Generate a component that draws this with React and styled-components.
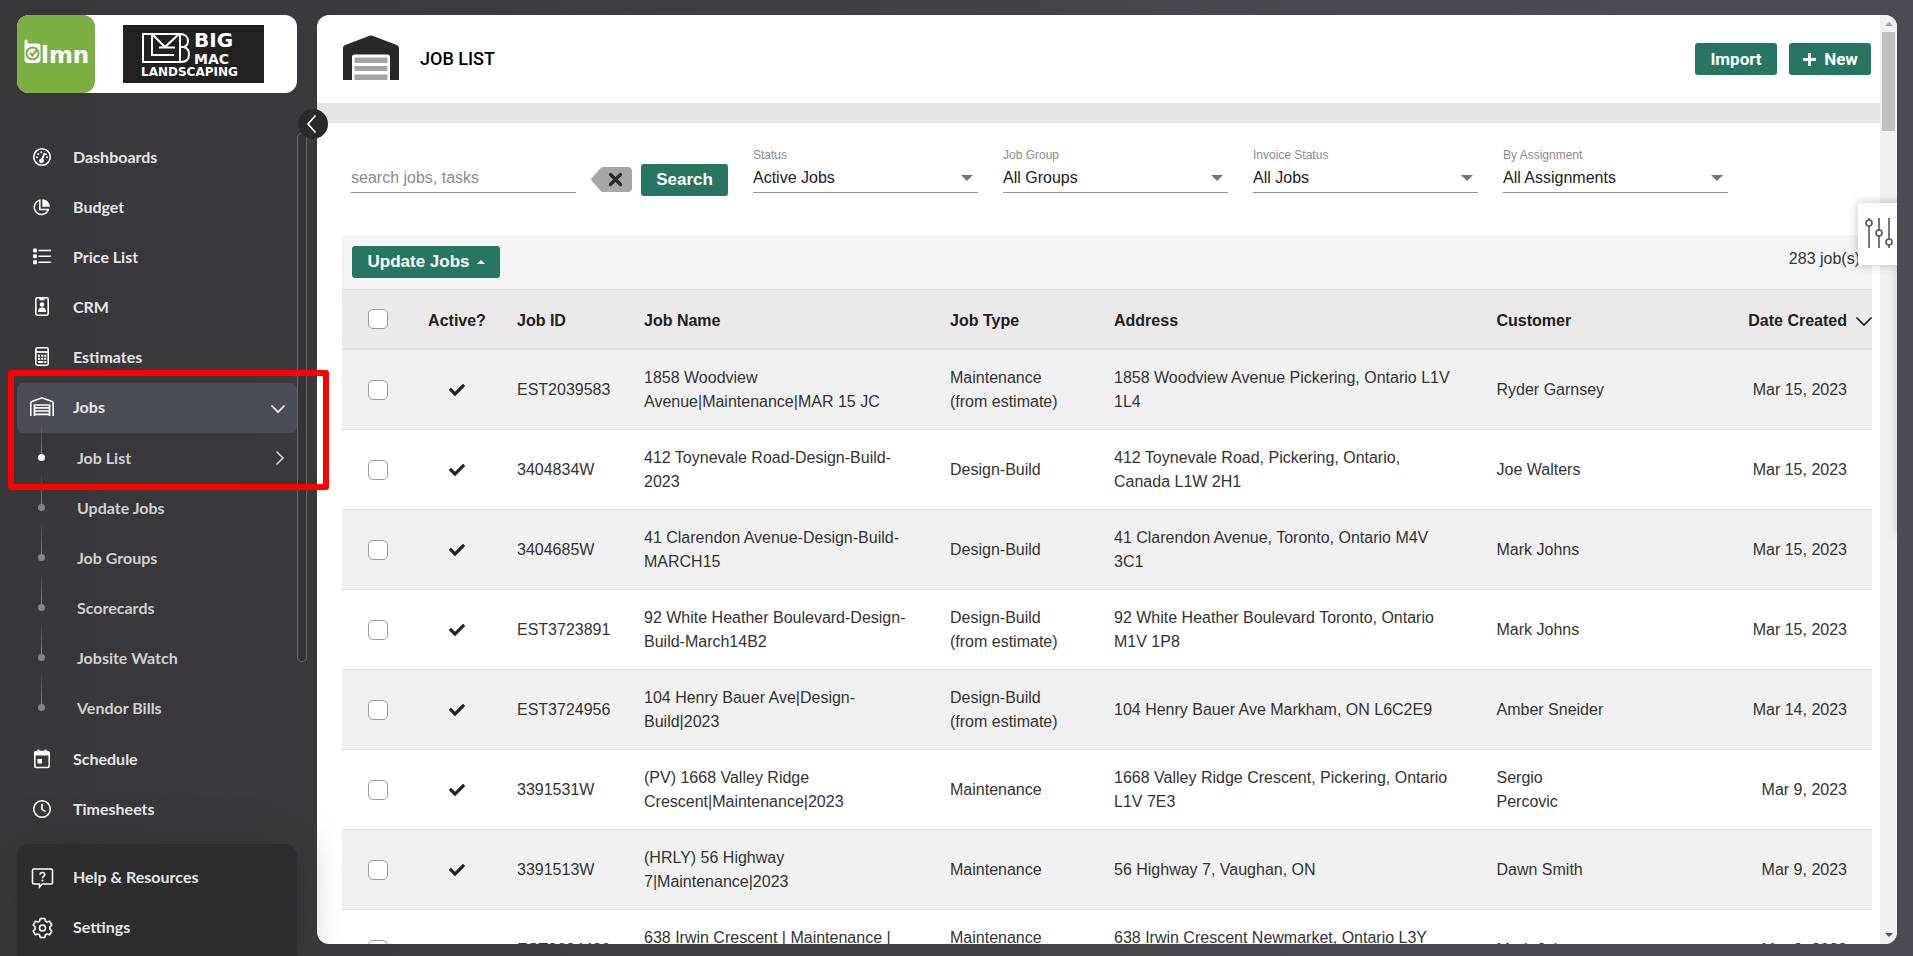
import React, { useState } from "react";
import styled, { createGlobalStyle } from "styled-components";
import { FaCheck, FaPlus } from "react-icons/fa";

const GlobalStyle = createGlobalStyle`
  * {
    box-sizing: border-box;
  }
  body {
    margin: 0;
    font-family: "Liberation Sans", Arial, sans-serif;
    font-size: 16px;
    color: #212121;
    background: linear-gradient(90deg, #38373b 0%, #3a393d 18%, #4c4b54 85%);
  }
  button, input, select {
    font-family: inherit;
    font-size: inherit;
  }
`;

const subLinks = [
  { title: "Job List", active: true },
  { title: "Update Jobs" },
  { title: "Job Groups" },
  { title: "Scorecards" },
  { title: "Jobsite Watch" },
  { title: "Vendor Bills" },
];

const filters = [
  { id: "status", label: "Status", value: "Active Jobs" },
  { id: "group", label: "Job Group", value: "All Groups" },
  { id: "invoice", label: "Invoice Status", value: "All Jobs" },
  { id: "assignment", label: "By Assignment", value: "All Assignments" },
];

const jobs = [
  {
    id: "EST2039583",
    name: "1858 Woodview\nAvenue|Maintenance|MAR 15 JC",
    type: "Maintenance\n(from estimate)",
    address: "1858 Woodview Avenue Pickering, Ontario L1V\n1L4",
    customer: "Ryder Garnsey",
    date: "Mar 15, 2023",
  },
  {
    id: "3404834W",
    name: "412 Toynevale Road-Design-Build-\n2023",
    type: "Design-Build",
    address: "412 Toynevale Road, Pickering, Ontario,\nCanada L1W 2H1",
    customer: "Joe Walters",
    date: "Mar 15, 2023",
  },
  {
    id: "3404685W",
    name: "41 Clarendon Avenue-Design-Build-\nMARCH15",
    type: "Design-Build",
    address: "41 Clarendon Avenue, Toronto, Ontario M4V\n3C1",
    customer: "Mark Johns",
    date: "Mar 15, 2023",
  },
  {
    id: "EST3723891",
    name: "92 White Heather Boulevard-Design-\nBuild-March14B2",
    type: "Design-Build\n(from estimate)",
    address: "92 White Heather Boulevard Toronto, Ontario\nM1V 1P8",
    customer: "Mark Johns",
    date: "Mar 15, 2023",
  },
  {
    id: "EST3724956",
    name: "104 Henry Bauer Ave|Design-\nBuild|2023",
    type: "Design-Build\n(from estimate)",
    address: "104 Henry Bauer Ave Markham, ON L6C2E9",
    customer: "Amber Sneider",
    date: "Mar 14, 2023",
  },
  {
    id: "3391531W",
    name: "(PV) 1668 Valley Ridge\nCrescent|Maintenance|2023",
    type: "Maintenance",
    address: "1668 Valley Ridge Crescent, Pickering, Ontario\nL1V 7E3",
    customer: "Sergio\nPercovic",
    date: "Mar 9, 2023",
  },
  {
    id: "3391513W",
    name: "(HRLY) 56 Highway\n7|Maintenance|2023",
    type: "Maintenance",
    address: "56 Highway 7, Vaughan, ON",
    customer: "Dawn Smith",
    date: "Mar 9, 2023",
  },
  {
    id: "EST3634480",
    name: "638 Irwin Crescent | Maintenance |\n2023",
    type: "Maintenance\n(from estimate)",
    address: "638 Irwin Crescent Newmarket, Ontario L3Y\n5A2",
    customer: "Mark Johns",
    date: "Mar 9, 2023",
  },
];

const Layout = styled.div`
  display: flex;
  height: 100vh;
  overflow: hidden;
`;

/* sidebar */

const Sidebar = styled.aside`
  flex: 0 0 317px;
  position: relative;
  z-index: 2;
  display: flex;
  flex-direction: column;
  padding: 15px 20px 0 17px;
  font-family: Lato, "Open Sans", sans-serif;
`;

const Brand = styled.div`
  display: flex;
  height: 78px;
  margin-bottom: 40px;
  background: #fff;
  border-radius: 12px;
  .brand-app {
    width: 78px;
    border-radius: 12px;
    background: #7caf41;
  }
  .brand-company {
    margin: 10px auto 10px 28px;
  }
`;

const Nav = styled.nav`
  position: relative;
  display: flex;
  flex-direction: column;
`;

const NavItem = styled.a`
  display: flex;
  align-items: center;
  flex: 0 0 50px;
  height: 50px;
  padding: 0 11px;
  border-radius: 6px;
  color: #e6e6e6;
  font-weight: 700;
  text-decoration: none;
  background: ${(props) => (props.$active ? "#4b4d55" : "transparent")};
  svg {
    color: #fff;
  }
  .nav-icon {
    margin-bottom: 2px;
  }
  .nav-title {
    flex: 1;
    margin-left: 17px;
    padding-bottom: 4px;
  }
`;

const SubMenu = styled.ul`
  list-style: none;
  margin: 0 0 2px;
  padding: 0;
`;

const SubItem = styled.li`
  a {
    display: flex;
    align-items: center;
    height: 50px;
    padding: 0 10px 0 21px;
    color: #cfcfd0;
    font-weight: 700;
    text-decoration: none;
  }
  .rail {
    display: flex;
    flex-direction: column;
    align-items: center;
    width: 7px;
    height: 50px;
    margin-right: 32px;
  }
  .rail::before {
    content: "";
    width: 1px;
    height: 31px;
    margin-top: -10px;
    background: linear-gradient(transparent, #8a8a8d);
  }
  .rail::after {
    content: "";
    width: 7px;
    height: 7px;
    border-radius: 50%;
    background: ${(props) => (props.$active ? "#fff" : "#858588")};
  }
  .nav-title {
    flex: 1;
    padding-bottom: 2px;
  }
`;

const JobsGroup = styled.div`
  position: relative;
`;

const Marker = styled.div`
  position: absolute;
  left: -9px;
  top: -13px;
  width: 321px;
  height: 120px;
  border: 6px solid #f00;
  border-radius: 3px;
  pointer-events: none;
`;

const NavScroll = styled.div`
  position: absolute;
  top: 0;
  right: -10px;
  width: 10px;
  height: 529px;
  border: 1px solid #68676b;
  border-radius: 6px;
  background: #343337;
`;

const NavFooter = styled.nav`
  margin-top: auto;
  padding: 9px 0 3px;
  border-radius: 12px 12px 0 0;
  background: #2d2d2e;
  box-shadow: 0 0 40px rgba(45, 45, 46, 0.6);
`;

const CollapseButton = styled.button`
  position: absolute;
  top: 109px;
  right: -11px;
  width: 30px;
  height: 30px;
  padding: 0 2px 0 0;
  border: 0;
  border-radius: 50%;
  background: #2a2a2c;
  color: #fff;
  display: flex;
  align-items: center;
  justify-content: center;
`;

/* content panel */

const Panel = styled.div`
  flex: 1;
  min-width: 0;
  position: relative;
  display: flex;
  margin: 15px 16px 12px 0;
  border-radius: 12px;
  background: #fff;
  overflow: hidden;
`;

const Content = styled.main`
  flex: 1;
  min-width: 0;
  overflow-y: auto;
  scrollbar-width: none;
`;

const PageHeader = styled.header`
  display: flex;
  align-items: center;
  height: 88px;
  padding: 0 9px 0 26px;
  border-bottom: 20px solid #e4e4e4;
  box-sizing: content-box;
  .page-icon {
    margin-bottom: 2px;
  }
  h1 {
    flex: 1;
    margin: 0 0 0 21px;
    padding-bottom: 2px;
    font-family: Roboto, sans-serif;
    font-size: 18px;
    font-weight: 500;
    color: #000;
  }
  .header-actions {
    display: flex;
    gap: 12px;
    font-family: Roboto, sans-serif;
  }
`;

const Button = styled.button`
  display: inline-flex;
  align-items: center;
  justify-content: center;
  gap: 7px;
  height: 32px;
  min-width: ${(props) => props.$width || "82px"};
  padding: 0 12px;
  border: 0;
  border-radius: 3px;
  background: #267663;
  color: #fff;
  font-size: 17px;
  font-weight: 700;
`;

const FilterBar = styled.form`
  display: flex;
  align-items: flex-end;
  padding: 23px 34px 39px;
`;

const SearchInput = styled.input`
  width: 225px;
  height: 34px;
  margin: 0 15px 3px 0;
  padding: 5px 0 0;
  border: 0;
  border-bottom: 1px solid #949494;
  background: transparent;
  &::placeholder {
    color: #8a8a8a;
  }
`;

const ClearButton = styled.button`
  display: flex;
  height: 25px;
  margin: 0 9px 4px 0;
  padding: 0;
  border: 0;
  background: none;
`;

const Field = styled.div`
  width: 225px;
  margin: 0 0 3px 25px;
  label {
    display: block;
    padding-top: 1px;
    font-size: 12px;
    line-height: 16px;
    color: #8a8a8a;
  }
`;

const SelectBox = styled.div`
  display: flex;
  align-items: center;
  height: 30px;
  border-bottom: 1px solid #949494;
  select {
    appearance: none;
    flex: 1;
    width: 100%;
    padding: 0;
    border: 0;
    background: transparent;
    color: #212121;
  }
  &::after {
    content: "";
    margin-right: 5px;
    border: 6px solid transparent;
    border-top-color: #757575;
    border-bottom: 0;
  }
`;

const TableToolbar = styled.div`
  display: flex;
  justify-content: space-between;
  align-items: flex-start;
  height: 54px;
  margin: 0 8px 0 25px;
  padding: 11px 12px 11px 10px;
  background: #f4f4f4;
  .job-count {
    margin-top: 4px;
    color: #333;
  }
`;

const Caret = styled.span`
  border: 4px solid transparent;
  border-bottom-color: #fff;
  border-top: 0;
`;

const TableWrap = styled.div`
  margin: 0 8px 0 25px;
`;

const Table = styled.table`
  width: 100%;
  table-layout: fixed;
  border-collapse: separate;
  border-spacing: 0;
  line-height: 24px;
  th,
  td {
    padding: 0 12px;
    text-align: left;
    white-space: pre-line;
    border-top: 1px solid #dee2e6;
  }
  th {
    height: 60px;
    padding-top: 4px;
    background: #ebe9ea;
    border-bottom: 1px solid #dee2e6;
    font-weight: 700;
  }
  td {
    height: 80px;
    color: #333;
  }
  tbody tr:nth-child(odd) td {
    background: #f1f1f1;
  }
  .col-check {
    padding: 0 0 0 26px;
  }
  .col-active {
    padding-left: 0;
    padding-right: 0;
    text-align: center;
  }
  .col-active svg {
    display: block;
    margin: 0 auto;
    color: #212121;
  }
  .col-id {
    padding-left: 17px;
    padding-right: 0;
  }
  .col-date {
    padding-right: 25px;
    text-align: right;
  }
  th.col-date {
    padding-right: 0;
  }
  .sort {
    display: inline-flex;
    align-items: center;
    gap: 9px;
    padding: 0;
    border: 0;
    background: none;
    color: inherit;
    font-weight: 700;
  }
`;

const Checkbox = styled.input`
  appearance: none;
  display: block;
  width: 20px;
  height: 20px;
  margin: 0;
  border: 1px solid #999;
  border-radius: 5px;
  background: #fff;
  &:checked {
    background: #267663;
  }
`;

const ScrollTrack = styled.div`
  flex: 0 0 17px;
  display: flex;
  flex-direction: column;
  align-items: center;
  padding: 7px 0;
  background: #f1f1f1;
  .thumb {
    width: 13px;
    height: 99px;
    margin-top: 6px;
    background: #c1c1c1;
  }
  .up {
    border: 4px solid transparent;
    border-bottom-color: #a3a3a3;
    border-top: 0;
  }
  .down {
    margin-top: auto;
    border: 4px solid transparent;
    border-top-color: #505050;
    border-bottom: 0;
  }
`;

const DrawerTab = styled.button`
  position: absolute;
  top: 188px;
  right: 0;
  width: 39px;
  height: 62px;
  padding: 2px 0 0 3px;
  border: 0;
  border-radius: 3px 0 0 3px;
  background: #fff;
  box-shadow: 0 0 10px rgba(0, 0, 0, 0.25);
`;

const DrawerEdge = styled.div`
  position: absolute;
  top: 188px;
  right: -4px;
  width: 4px;
  height: 330px;
  box-shadow: 0 0 8px rgba(0, 0, 0, 0.25);
`;

const Icon = ({ children }) => (
  <svg
    className="nav-icon"
    width="28"
    height="28"
    viewBox="0 0 28 28"
    fill="none"
    stroke="currentColor"
    strokeWidth="1.6"
    aria-hidden="true"
  >
    {children}
  </svg>
);

const icons = {
  gauge: (
    <Icon>
      <circle cx="14" cy="14" r="8.3" />
      <circle cx="13.5" cy="17.8" r="1.6" fill="currentColor" />
      <path d="M14 17l2.5-7" strokeWidth="1.8" />
      <g fill="currentColor" stroke="none">
        <circle cx="9" cy="14.2" r="1" />
        <circle cx="10.2" cy="10.9" r="1" />
        <circle cx="13.3" cy="9.2" r="1" />
        <circle cx="19" cy="14.2" r="1" />
        <circle cx="18" cy="11.2" r="1" />
      </g>
    </Icon>
  ),
  pie: (
    <Icon>
      <path d="M11.8 7.3a7.2 7.2 0 1 0 8.6 9.2h-8.6z" strokeWidth="1.5" />
      <path d="M14.3 6.2v7.6h7.6a7.6 7.6 0 0 0-7.6-7.6z" fill="currentColor" stroke="none" />
    </Icon>
  ),
  list: (
    <Icon>
      <path d="M10.5 7.5H23M10.5 13.3H23M10.5 19.3H23" />
      <g fill="currentColor" stroke="none">
        <rect x="5" y="5.5" width="4" height="4" rx="1" />
        <rect x="5" y="11.3" width="4" height="4" rx="1" />
        <rect x="5" y="17.3" width="4" height="4" rx="1" />
      </g>
    </Icon>
  ),
  badge: (
    <Icon>
      <rect x="7.8" y="4.8" width="12.4" height="17.4" rx="1.6" />
      <g fill="currentColor" stroke="none">
        <rect x="11.5" y="4.5" width="5" height="2.8" />
        <circle cx="14" cy="11.5" r="2.2" />
        <path d="M10 19c0-3 1.5-4.4 4-4.4s4 1.4 4 4.4z" />
      </g>
    </Icon>
  ),
  calc: (
    <Icon>
      <rect x="7.8" y="4.8" width="12.4" height="17.4" rx="1.6" />
      <path d="M8 9h12" strokeWidth="1.8" />
      <path
        d="M10 12.8h2.1m1 0h2.1m1 0h2.100M10 15.700h2.100m1 0h2.100m1 0h2.100M10 19.100h5.200m1 0h2.100"
        strokeWidth="2"
      />
    </Icon>
  ),
  garage: (
    <Icon>
      <path d="M2.8 23V10.300c0-1 .4-1.500 1.200-1.800L14 4.800 24 8.500c.8.3 1.200.8 1.200 1.800V23" />
      <path d="M6.500 23V12h15v11M6.500 14.800h15M6.500 18h15M6.500 21.300h15" strokeWidth="1.7" />
    </Icon>
  ),
  calendar: (
    <Icon>
      <rect x="6.8" y="6.500" width="14.400" height="16" rx="1.6" />
      <path d="M6.8 8.500h14.400" strokeWidth="4" />
      <path d="M10.500 4.500v3M17.500 4.500v3" />
      <rect x="9.500" y="14" width="4.500" height="4.500" fill="currentColor" stroke="none" />
    </Icon>
  ),
  clock: (
    <Icon>
      <circle cx="14" cy="14" r="8.300" />
      <path d="M14 8.700v5.600l3.500 2.300" />
    </Icon>
  ),
  help: (
    <Icon>
      <path d="M6 6h17c1 0 1.500.5 1.500 1.500v12c0 1-.5 1.500-1.500 1.500H14.300L11.500 24v-3H6c-1 0-1.500-.5-1.500-1.500v-12C4.500 6.500 5 6 6 6z" />
      <path d="M12 11.700c0-1.500 1-2.300 2.400-2.300s2.400.8 2.400 2.100c0 1.900-2.400 1.900-2.400 3.700" strokeWidth="1.5" />
      <circle cx="14.400" cy="17.400" r="1" fill="currentColor" stroke="none" />
    </Icon>
  ),
  gear: (
    <Icon>
      <circle cx="14.5" cy="15" r="3" />
      <path
        d="M12.300 5.500h4.400l.7 2.600 1.600.9 2.600-.8 2.200 3.800-1.900 1.900v2.200l1.900 1.900-2.200 3.800-2.600-.8-1.600.9-.7 2.600h-4.400l-.7-2.600-1.600-.9-2.600.8L5.200 18l1.900-1.900v-2.200L5.200 12l2.200-3.800 2.600.8 1.600-.9z"
        strokeLinejoin="round"
      />
    </Icon>
  ),
};

const mainLinks = [
  { title: "Dashboards", icon: icons.gauge },
  { title: "Budget", icon: icons.pie },
  { title: "Price List", icon: icons.list },
  { title: "CRM", icon: icons.badge },
  { title: "Estimates", icon: icons.calc },
];

const lowerLinks = [
  { title: "Schedule", icon: icons.calendar },
  { title: "Timesheets", icon: icons.clock },
];

const footerLinks = [
  { title: "Help & Resources", icon: icons.help },
  { title: "Settings", icon: icons.gear },
];

const Chevron = ({ d, width = 16, height = 16 }) => (
  <svg
    width={width}
    height={height}
    viewBox={`0 0 ${width} ${height}`}
    fill="none"
    stroke="currentColor"
    strokeWidth="1.7"
    strokeLinecap="round"
    aria-hidden="true"
  >
    <path d={d} />
  </svg>
);

const AppLogo = () => (
  <svg className="brand-app" viewBox="0 0 78 78" role="img" aria-label="lmn">
    <path
      d="M7.500 25.500c0-1 3-1 3 0v3H21c1.500 0 2.500 1 2.500 2.500v13.500c0 2-1.300 3.500-3.500 3.500h-9c-2.200 0-3.500-1.500-3.500-3.500z"
      fill="#fff"
    />
    <circle cx="15.500" cy="38.500" r="6" fill="#fff" stroke="#7caf41" strokeWidth="2" />
    <path d="M13 38l2.300 2.300 5.200-6" fill="none" stroke="#7caf41" strokeWidth="2.200" />
    <text x="24" y="48" fontFamily="DejaVu Sans" fontWeight="700" fontSize="23" fill="#fff">
      lmn
    </text>
  </svg>
);

const CompanyLogo = () => (
  <svg
    className="brand-company"
    width="141"
    height="58"
    viewBox="0 0 141 58"
    role="img"
    aria-label="Big Mac Landscaping"
  >
    <rect width="141" height="58" fill="#212121" />
    <g fill="none" stroke="#fff" strokeWidth="2">
      <path d="M20 9h37c5 0 8 3 8 7 0 3-1.500 5-4 6 3 1 5 3 5 7 0 5-3 8-8 8H20z" />
      <path d="M29 9v21h22M29 9l13 13 14-13M36 22.500h16" />
      <path d="M57 9v28M57 22h4" />
    </g>
    <g fill="#fff" fontFamily="DejaVu Sans" fontWeight="700">
      <text x="71" y="22" fontSize="20">BIG</text>
      <text x="71" y="39" fontSize="14">MAC</text>
      <text x="18" y="51" fontSize="12">LANDSCAPING</text>
    </g>
  </svg>
);

const GarageIcon = () => (
  <svg className="page-icon" width="56" height="46" viewBox="0 0 56 46" aria-hidden="true">
    <path
      d="M0 45V13.500c0-1.600.8-2.700 2.300-3.400L26.500.8c1-.4 2-.4 3 0l24.200 9.300c1.500.7 2.300 1.800 2.300 3.400V45h-9V22c0-1.500-1-2.500-2.500-2.500h-33C10 19.500 9 20.500 9 22v23z"
      fill="#28282b"
    />
    <path d="M11.500 22.500h33V28h-33zM11.500 31h33v5h-33zM11.500 39.500h33V45h-33z" fill="#a6a6a6" />
  </svg>
);

const NavLinks = ({ links }) =>
  links.map((item) => (
    <NavItem href="#" key={item.title}>
      {item.icon}
      <span className="nav-title">{item.title}</span>
    </NavItem>
  ));

const SideNav = () => (
  <Sidebar>
    <Brand>
      <AppLogo />
      <CompanyLogo />
    </Brand>
    <Nav aria-label="Main">
      <NavScroll />
      <NavLinks links={mainLinks} />
      <JobsGroup>
        <NavItem href="#" $active>
          {icons.garage}
          <span className="nav-title">Jobs</span>
          <Chevron d="M2 6l6 6 6-6" />
        </NavItem>
        <SubMenu>
          {subLinks.map((item) => (
            <SubItem key={item.title} $active={item.active}>
              <a href="#">
                <span className="rail"></span>
                <span className="nav-title">{item.title}</span>
                {item.active && <Chevron d="M6 2l6 6-6 6" />}
              </a>
            </SubItem>
          ))}
        </SubMenu>
        <Marker />
      </JobsGroup>
      <NavLinks links={lowerLinks} />
    </Nav>
    <NavFooter aria-label="Support">
      <NavLinks links={footerLinks} />
    </NavFooter>
    <CollapseButton type="button" aria-label="Collapse menu">
      <Chevron d="M11 1L4 9l7 8" height={18} />
    </CollapseButton>
  </Sidebar>
);

const Filters = () => {
  const [search, setSearch] = useState("");
  return (
    <FilterBar onSubmit={(e) => e.preventDefault()}>
      <SearchInput
        aria-label="Search"
        placeholder="search jobs, tasks"
        value={search}
        onChange={(e) => setSearch(e.target.value)}
      />
      <ClearButton type="button" aria-label="Clear search" onClick={() => setSearch("")}>
        <svg width="41" height="25" viewBox="0 0 41 25">
          <path
            d="M12 0h25c2.500 0 4 1.500 4 4v17c0 2.500-1.500 4-4 4H12c-1 0-1.800-.4-2.500-1.200L.8 14c-.9-1-.9-2 0-3L9.500 1.200C10.200.4 11 0 12 0z"
            fill="#a6a6a6"
          />
          <path d="M19.500 7.500l10 10m0-10l-10 10" stroke="#28282b" strokeWidth="3.2" strokeLinecap="round" />
        </svg>
      </ClearButton>
      <Button type="submit" $width="87px">
        Search
      </Button>
      {filters.map((item) => (
        <Field key={item.id}>
          <label htmlFor={item.id}>{item.label}</label>
          <SelectBox>
            <select id={item.id}>
              <option>{item.value}</option>
            </select>
          </SelectBox>
        </Field>
      ))}
    </FilterBar>
  );
};

const JobTable = () => (
  <TableWrap>
    <Table>
      <colgroup>
        <col width="72" />
        <col width="86" />
        <col width="132" />
        <col width="20%" />
        <col width="164" />
        <col width="25%" />
        <col width="132" />
        <col />
      </colgroup>
      <thead>
        <tr>
          <th className="col-check">
            <Checkbox type="checkbox" aria-label="Select all jobs" />
          </th>
          <th className="col-active">Active?</th>
          <th className="col-id">Job ID</th>
          <th>Job Name</th>
          <th>Job Type</th>
          <th>Address</th>
          <th>Customer</th>
          <th className="col-date">
            <button type="button" className="sort">
              Date Created
              <Chevron d="M1 5l7 7 7-7" />
            </button>
          </th>
        </tr>
      </thead>
      <tbody>
        {jobs.map((job) => (
          <tr key={job.id}>
            <td className="col-check">
              <Checkbox type="checkbox" aria-label={`Select ${job.id}`} />
            </td>
            <td className="col-active">
              <FaCheck size={16} />
            </td>
            <td className="col-id">{job.id}</td>
            <td>{job.name}</td>
            <td>{job.type}</td>
            <td>{job.address}</td>
            <td>{job.customer}</td>
            <td className="col-date">{job.date}</td>
          </tr>
        ))}
      </tbody>
    </Table>
  </TableWrap>
);

const App = () => {
  return (
    <Layout>
      <GlobalStyle />
      <SideNav />
      <Panel>
        <Content>
          <PageHeader>
            <GarageIcon />
            <h1>JOB LIST</h1>
            <div className="header-actions">
              <Button type="button">Import</Button>
              <Button type="button">
                <FaPlus size={15} />
                New
              </Button>
            </div>
          </PageHeader>
          <Filters />
          <TableToolbar>
            <Button type="button" $width="148px">
              Update Jobs
              <Caret />
            </Button>
            <span className="job-count">283 job(s)</span>
          </TableToolbar>
          <JobTable />
        </Content>
        <ScrollTrack aria-hidden="true">
          <span className="up"></span>
          <span className="thumb"></span>
          <span className="down"></span>
        </ScrollTrack>
        <DrawerEdge />
        <DrawerTab type="button" aria-label="Customize columns">
          <svg width="28" height="32" viewBox="0 0 28 32" fill="none" stroke="#555" strokeWidth="1.6">
            <path d="M4 1v2M4 9v22M14 1v12M14 19v12M24 1v21M24 28v3" />
            <circle cx="4" cy="6" r="3" />
            <circle cx="14" cy="16" r="3" />
            <circle cx="24" cy="25" r="3" />
          </svg>
        </DrawerTab>
      </Panel>
    </Layout>
  );
};

export default App;
